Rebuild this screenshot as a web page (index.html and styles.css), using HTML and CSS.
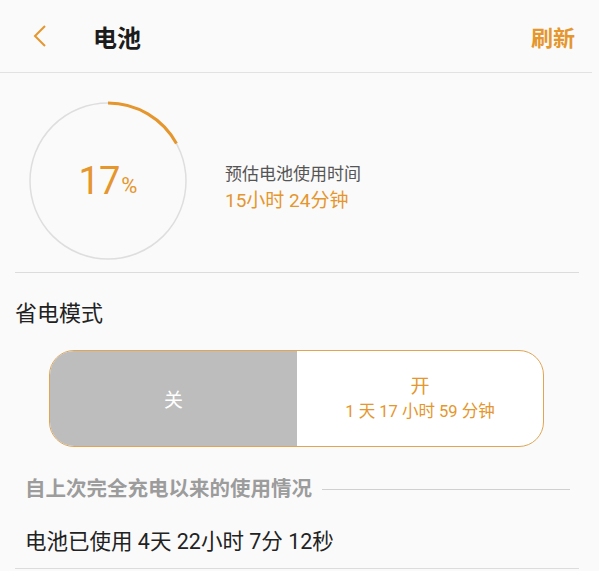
FILE: index.html
```html
<!DOCTYPE html>
<html lang="zh-CN">
<head>
<meta charset="UTF-8">
<meta name="viewport" content="width=device-width, initial-scale=1.0">
<title>电池</title>
<link rel="stylesheet" href="styles.css">
</head>
<body>
<div class="header">
  <svg class="back" width="16" height="22" viewBox="0 0 16 22">
    <polyline points="13,1 3,11 13,21" fill="none" stroke="#e5962d" stroke-width="2"/>
  </svg>
  <h1 class="title">电池</h1>
  <span class="refresh">刷新</span>
</div>

<div class="summary">
  <svg class="gauge" width="160" height="160" viewBox="0 0 160 160">
    <circle cx="80" cy="80" r="78" fill="none" stroke="#dedede" stroke-width="1.5"/>
    <!-- 17% arc, starts at top, clockwise -->
    <circle cx="80" cy="80" r="78" fill="none" stroke="#e5962d" stroke-width="3"
      stroke-dasharray="83.3 490.1" transform="rotate(-90 80 80)"/>
  </svg>
  <div class="percent"><span class="num">17</span><span class="sign">%</span></div>
  <div class="estimate">
    <p class="est-label">预估电池使用时间</p>
    <p class="est-value">15小时 24分钟</p>
  </div>
</div>

<p class="mode-title">省电模式</p>

<div class="toggle">
  <div class="toggle-off">关</div>
  <div class="toggle-on">
    <span class="on-label">开</span>
    <span class="on-time">1 天 17 小时 59 分钟</span>
  </div>
</div>

<div class="section-head">
  <span>自上次完全充电以来的使用情况</span>
  <div class="section-line"></div>
</div>

<div class="usage">电池已使用 4天 22小时 7分 12秒</div>
</body>
</html>
```

FILE: styles.css
```css
body {
  margin: 0;
  background: #fafafa;
  font-family: Roboto, "Noto Sans CJK SC", sans-serif;
  color: #222;
}

p {
  margin: 0;
}

.header {
  display: flex;
  align-items: center;
  height: 72px;
  padding-left: 32px;
  margin-right: 7px;
  border-bottom: 1px solid #e2e2e2;
}

.back {
  display: block;
}

.title {
  margin: 0 0 0 45px;
  font-size: 24px;
  font-weight: bold;
  color: #1c1c1c;
  flex: 1;
}

.refresh {
  margin-right: 17px;
  font-size: 22px;
  font-weight: bold;
  color: #e5962d;
}

.summary {
  position: relative;
  display: flex;
  align-items: flex-start;
  height: 200px;
  box-sizing: border-box;
  margin: 0 20px 0 15px;
  padding: 28px 0 0 13px;
  border-bottom: 1px solid #dcdcdc;
}

.gauge {
  display: block;
}

.percent {
  position: absolute;
  left: 13px;
  top: 28px;
  width: 160px;
  height: 160px;
  display: flex;
  justify-content: center;
  align-items: center;
  color: #e5962d;
}

.num {
  font-size: 38px;
  letter-spacing: -1px;
}

.sign {
  font-size: 22px;
  margin: 8px 0 0 2px;
}

.estimate {
  margin: 60px 0 0 37px;
}

.est-label {
  font-size: 17px;
  line-height: 26px;
  color: #555;
}

.est-value {
  font-size: 19px;
  line-height: 28px;
  color: #e5962d;
}

.mode-title {
  margin: 25px 0 0 15px;
  font-size: 22px;
  line-height: 32px;
  color: #222;
}

.toggle {
  display: grid;
  grid-template-columns: 247px 1fr;
  width: 495px;
  height: 97px;
  box-sizing: border-box;
  margin: 20px 0 0 49px;
  border: 1px solid #dfa552;
  border-radius: 25px;
  overflow: hidden;
  background: #fff;
}

.toggle-off {
  display: flex;
  align-items: center;
  justify-content: center;
  background: #bdbdbd;
  color: #fff;
  font-size: 19px;
}

.toggle-on {
  display: flex;
  flex-direction: column;
  align-items: center;
  justify-content: center;
  color: #e5962d;
}

.on-label {
  font-size: 19px;
  line-height: 26px;
}

.on-time {
  font-size: 16.5px;
  line-height: 24px;
}

.section-head {
  display: flex;
  align-items: center;
  margin: 29px 29px 0 25px;
  font-size: 20.5px;
  font-weight: bold;
  line-height: 26px;
  color: #9c9c9c;
}

.section-line {
  flex: 1;
  height: 1px;
  margin-left: 10px;
  background: #d0d0d0;
}

.usage {
  margin: 25px 20px 0 15px;
  padding: 0 0 11px 10px;
  font-size: 21.5px;
  line-height: 30px;
  color: #222;
  border-bottom: 1px solid #dcdcdc;
}
```
